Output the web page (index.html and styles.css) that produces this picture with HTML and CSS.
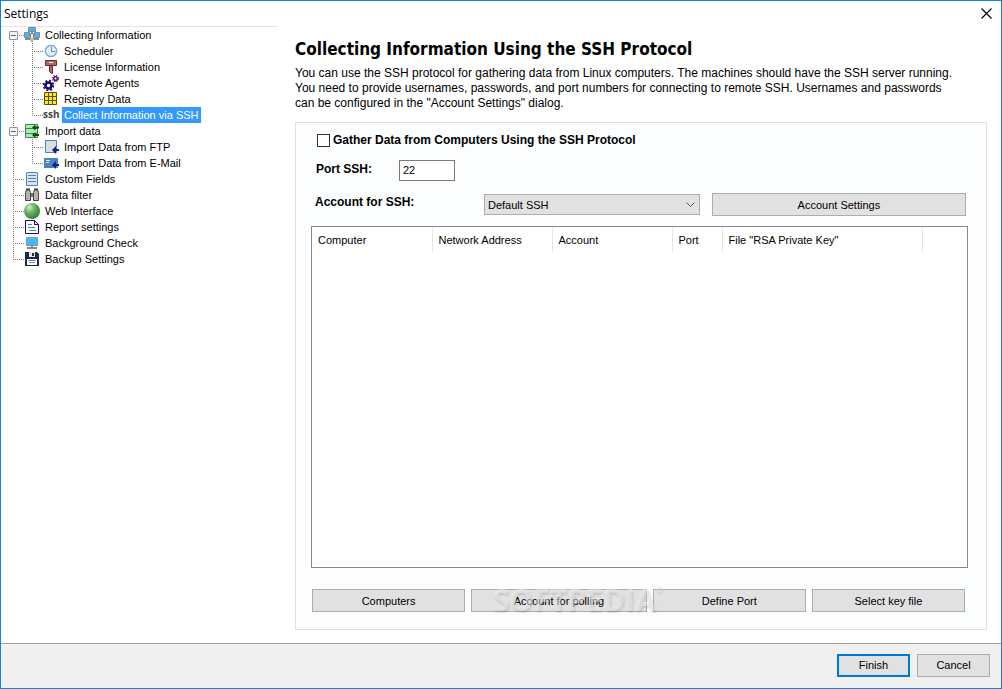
FILE: index.html
```html
<!DOCTYPE html>
<html lang="en">
<head>
    <meta charset="UTF-8">
    <meta name="viewport" content="width=device-width, initial-scale=1.0">
    <title>Settings</title>
    <link rel="stylesheet" href="styles.css">
</head>
<body>
    <div class="window">
        <header class="titlebar">
            <span>Settings</span>
            <button class="close" type="button" aria-label="Close">
                <svg width="11" height="11" viewBox="0 0 11 11"><path d="M.5.5l10 10M10.5.5l-10 10" stroke="#000" stroke-width="1.2"/></svg>
            </button>
        </header>

        <div class="main">
            <nav class="sidebar">
                <ul class="tree">
                    <li>
                        <div class="row">
                            <button class="toggle" type="button" aria-expanded="true" aria-label="Collecting Information group"></button>
                            <svg class="icon" viewBox="0 0 16 16">
                                <path d="M4.5.5h7v4h-7z" fill="#3fb8ff" stroke="#888"/>
                                <path d="M.5 5.5h5v5h-5zM10.5 5.5h5v5h-5z" fill="#3fb8ff" stroke="#888"/>
                                <path d="M1 12h5M10 12h5M7 5.5h2" stroke="#888" stroke-width="2"/>
                                <path d="M6.5 6.5h3v4l-1 4h-1l-1-4z" fill="#e8e8e8" stroke="#888"/>
                                <path d="M8 11v4" stroke="#8fc98f" stroke-width="2"/>
                            </svg>
                            <a href="#">Collecting Information</a>
                        </div>
                        <ul>
                            <li><div class="row">
                                <svg class="icon" viewBox="0 0 16 16">
                                    <circle cx="8" cy="8" r="5.6" fill="#e8f1fa" stroke="#81aad2" stroke-width="1.5"/>
                                    <path d="M8.5 4v4.5h3.5" fill="none" stroke="#5888b8"/>
                                </svg>
                                <a href="#">Scheduler</a>
                            </div></li>
                            <li><div class="row">
                                <svg class="icon" viewBox="0 0 16 16">
                                    <path d="M2.5 1.5h11v5h-11z" fill="#b96464" stroke="#672b2b"/>
                                    <path d="M6 3.5h4" stroke="#fff"/>
                                    <path d="M6.5 6.5h3v8h-1l-2-2z" fill="#b96464" stroke="#672b2b"/>
                                </svg>
                                <a href="#">License Information</a>
                            </div></li>
                            <li><div class="row">
                                <svg class="icon" viewBox="0 0 16 16">
                                    <circle cx="5.5" cy="10.5" r="3" fill="#fff" stroke="#19096b" stroke-width="2.6"/>
                                    <circle cx="5.5" cy="10.5" r="4.8" fill="none" stroke="#19096b" stroke-width="2" stroke-dasharray="1.9 1.87"/>
                                    <circle cx="12.5" cy="3.5" r="1.8" fill="#fff" stroke="#5c1163" stroke-width="1.5"/>
                                    <circle cx="12.5" cy="3.5" r="3" fill="none" stroke="#5c1163" stroke-width="1.2" stroke-dasharray="1.2 1.16"/>
                                </svg>
                                <a href="#">Remote Agents</a>
                            </div></li>
                            <li><div class="row">
                                <svg class="icon" viewBox="0 0 16 16">
                                    <path d="M1.5 1.5h12v12h-12z" fill="#ffeb0a" stroke="#555018"/>
                                    <path d="M5.5 1v13M9.5 1v13M1 5.5h13M1 9.5h13" stroke="#555018"/>
                                </svg>
                                <a href="#">Registry Data</a>
                            </div></li>
                            <li><div class="row">
                                <span class="icon ssh">ssh</span>
                                <a class="selected" href="#" aria-current="page">Collect Information via SSH</a>
                            </div></li>
                        </ul>
                    </li>
                    <li>
                        <div class="row">
                            <button class="toggle" type="button" aria-expanded="true" aria-label="Import data group"></button>
                            <svg class="icon" viewBox="0 0 16 16">
                                <path d="M1.5 1.5h12v13h-12z" fill="#a4f0a4" stroke="#4b7a70"/>
                                <path d="M1 5.5h13M1 10.5h13" stroke="#4b7a70"/>
                                <path d="M15 4.5h-5M15 12h-5" stroke="#0a500a" stroke-width="2"/>
                                <path d="M8 4.5l3.5-3v6zM8 12l3.5-3v6z" fill="#0a500a"/>
                            </svg>
                            <a href="#">Import data</a>
                        </div>
                        <ul>
                            <li><div class="row">
                                <svg class="icon" viewBox="0 0 16 16">
                                    <path d="M2.5 1.5h11v12h-11z" fill="#dcdcdc" stroke="#4a84be"/>
                                    <path d="M16 11h-5" stroke="#1d1d8f" stroke-width="2"/>
                                    <path d="M9 11l4-4v8z" fill="#1d1d8f"/>
                                </svg>
                                <a href="#">Import Data from FTP</a>
                            </div></li>
                            <li><div class="row">
                                <svg class="icon" viewBox="0 0 16 16">
                                    <path d="M1 3h14v10h-14z" fill="#4a84be"/>
                                    <path d="M3 5.5h4M3 7.5h3" stroke="#dce8f4"/>
                                    <path d="M16 10h-5" stroke="#1d1d8f" stroke-width="2"/>
                                    <path d="M9 10l4-4v8z" fill="#1d1d8f"/>
                                </svg>
                                <a href="#">Import Data from E-Mail</a>
                            </div></li>
                        </ul>
                    </li>
                    <li><div class="row">
                        <svg class="icon" viewBox="0 0 16 16">
                            <path d="M2.5 1.5h11v13h-11z" fill="#e0e4e8" stroke="#4a84be"/>
                            <path d="M4 4.5h8M4 7.5h8M4 10.5h8" stroke="#4a84be"/>
                        </svg>
                        <a href="#">Custom Fields</a>
                    </div></li>
                    <li><div class="row">
                        <svg class="icon" viewBox="0 0 16 16">
                            <path d="M2.5 2.5h3l1 3v8h-5v-8zM10.5 2.5h3l1 3v8h-5v-8z" fill="#b4b4b4" stroke="#444"/>
                            <path d="M2 2.5h4M10 2.5h4" stroke="#444" stroke-width="2"/>
                            <path d="M7 6h2v4h-2z" fill="#777"/>
                        </svg>
                        <a href="#">Data filter</a>
                    </div></li>
                    <li><div class="row">
                        <svg class="icon" viewBox="0 0 16 16">
                            <defs><radialGradient id="ball" cx="35%" cy="28%" r="75%">
                                <stop offset="0" stop-color="#d2edcb"/>
                                <stop offset=".4" stop-color="#70b867"/>
                                <stop offset="1" stop-color="#317a32"/>
                            </radialGradient></defs>
                            <circle cx="8" cy="8" r="8" fill="url(#ball)"/>
                        </svg>
                        <a href="#">Web Interface</a>
                    </div></li>
                    <li><div class="row">
                        <svg class="icon" viewBox="0 0 16 16">
                            <path d="M1.5 1.5h9l4 4v9h-13z" fill="#fff" stroke="#19096b"/>
                            <path d="M10.5 1.5v4h4" fill="none" stroke="#19096b"/>
                            <path d="M4 5.5h4M4 8.5h7M5 11.5h7" stroke="#4a84be"/>
                        </svg>
                        <a href="#">Report settings</a>
                    </div></li>
                    <li><div class="row">
                        <svg class="icon" viewBox="0 0 16 16">
                            <path d="M2.5 2.5h11v8h-11z" fill="#3fb8ff" stroke="#8c9aa4"/>
                            <path d="M7 11h2v1h4v2h-10v-2h4z" fill="#888"/>
                        </svg>
                        <a href="#">Background Check</a>
                    </div></li>
                    <li><div class="row">
                        <svg class="icon" viewBox="0 0 16 16">
                            <path d="M1 1h12l2 2v12h-14z" fill="#1c2a40"/>
                            <path d="M5 1h6v5h-6z" fill="#e8e8e8"/>
                            <path d="M8 2h2v3h-2z" fill="#1c2a40"/>
                            <path d="M3 8h10v6h-10z" fill="#fff"/>
                            <path d="M4 9.5h8M5 11.5h6" stroke="#888"/>
                        </svg>
                        <a href="#">Backup Settings</a>
                    </div></li>
                </ul>
            </nav>

            <main class="content">
                <h1>Collecting Information Using the SSH Protocol</h1>
                <p class="intro">You can use the SSH protocol for gathering data from Linux computers. The machines should have the SSH server running. You need to provide usernames, passwords, and port numbers for connecting to remote SSH. Usernames and passwords can be configured in the "Account Settings" dialog.</p>

                <form class="panel">
                    <div class="field check">
                        <input type="checkbox" id="gather">
                        <label for="gather">Gather Data from Computers Using the SSH Protocol</label>
                    </div>
                    <div class="field port">
                        <label for="port">Port SSH:</label>
                        <input type="text" id="port" value="22">
                    </div>
                    <div class="field account">
                        <label for="account">Account for SSH:</label>
                        <select id="account">
                            <option>Default SSH</option>
                        </select>
                        <button class="btn" type="button">Account Settings</button>
                    </div>

                    <div class="list">
                        <table>
                            <thead>
                                <tr>
                                    <th class="wide">Computer</th>
                                    <th class="wide">Network Address</th>
                                    <th class="wide">Account</th>
                                    <th class="narrow">Port</th>
                                    <th class="key">File "RSA Private Key"</th>
                                    <td></td>
                                </tr>
                            </thead>
                            <tbody></tbody>
                        </table>
                    </div>

                    <div class="actions">
                        <button class="btn" type="button">Computers</button>
                        <button class="btn polling" type="button">Account for polling</button>
                        <button class="btn" type="button">Define Port</button>
                        <button class="btn" type="button">Select key file</button>
                        <span class="watermark">SOFTPEDIA<sup>®</sup></span>
                    </div>
                </form>
            </main>
        </div>

        <footer class="footer">
            <button class="btn default" type="button">Finish</button>
            <button class="btn" type="button">Cancel</button>
        </footer>
    </div>

    <script>
        document.querySelectorAll('.toggle').forEach((btn) => {
            btn.addEventListener('click', () => {
                const open = btn.getAttribute('aria-expanded') === 'true';
                btn.setAttribute('aria-expanded', !open);
                btn.closest('li').querySelector('ul').hidden = open;
            })
        })
    </script>
</body>
</html>
```

FILE: styles.css
```css
*{
    box-sizing: border-box;
}
body{
    margin: 0;
    font: 11px/14px "Liberation Sans", Arial, sans-serif;
    color: #000;
    background: #fff;
}
button, input, select{
    font: inherit;
    color: inherit;
    border-radius: 0;
}
.window{
    display: flex;
    flex-direction: column;
    min-height: 100vh;
    border: 1px solid #1883d7;
}
.titlebar{
    display: flex;
    justify-content: space-between;
    align-items: center;
    height: 25px;
    padding: 0 9px 0 3px;
    font: 12px/16px "Open Sans", "Noto Sans", sans-serif;
}
.close{
    display: flex;
    padding: 0;
    border: 0;
    background: none;
}
.main{
    flex: 1;
    display: flex;
}

/* tree */
.sidebar{
    width: 277px;
    flex-shrink: 0;
    border-top: 1px solid #e3e3e3;
    padding-left: 12px;
}
.tree, .tree ul{
    margin: 0;
    padding: 0;
    list-style: none;
}
.tree ul{
    padding-left: 19px;
}
.tree li{
    background:
        repeating-linear-gradient(to bottom, #808080 0 1px, transparent 1px 2px) 0 0 / 1px 100% no-repeat,
        repeating-linear-gradient(to right, #808080 0 1px, transparent 1px 2px) 0 8px / 12px 1px no-repeat;
}
.tree > li:first-child{
    background-position: 0 8px, 0 8px;
}
.tree li:last-child{
    background-size: 1px 8px, 12px 1px;
}
.row{
    display: flex;
    align-items: center;
    height: 16px;
    padding-left: 11px;
}
.toggle{
    width: 9px;
    height: 9px;
    margin: 0 6px 0 -15px;
    padding: 0;
    border: 1px solid #919191;
    border-radius: 1px;
    background: linear-gradient(#4b63a7, #4b63a7) center / 5px 1px no-repeat, #f6f6f6;
}
.toggle[aria-expanded="false"]{
    background: linear-gradient(#4b63a7, #4b63a7) center / 5px 1px no-repeat, linear-gradient(#4b63a7, #4b63a7) center / 1px 5px no-repeat, #f6f6f6;
}
.icon{
    width: 16px;
    height: 16px;
    flex-shrink: 0;
}
.ssh{
    font: bold 10px/14px "Open Sans", sans-serif;
    color: #444;
    background: #fff;
}
.row a{
    margin-left: 3px;
    padding: 0 2px;
    line-height: 16px;
    color: #000;
    text-decoration: none;
    white-space: nowrap;
}
.row a.selected{
    color: #fff;
    background: #3399ff;
}

/* page */
.content{
    flex: 1;
    display: flex;
    flex-direction: column;
    padding: 13px 14px 13px 17px;
}
h1{
    margin: 0 0 7px;
    font: bold 17px/20px "DejaVu Sans Condensed", Tahoma, sans-serif;
}
.intro{
    margin: 0 30px 11px 0;
    font-size: 12px;
    line-height: 15px;
}
.panel{
    flex: 1;
    display: flex;
    flex-direction: column;
    padding: 10px 18px 17px 15px;
    border: 1px solid #dfdfdf;
    background: #fcfdff;
}
.field{
    display: flex;
    align-items: center;
    padding-left: 5px;
}
.field label{
    font-size: 12px;
    font-weight: bold;
}
.check input{
    appearance: none;
    width: 13px;
    height: 13px;
    margin: 0 3px 0 1px;
    border: 1px solid #333;
    background: #fff;
}
.check input:checked{
    background: #333;
    box-shadow: inset 0 0 0 2px #fff;
}
.port{
    margin: 13px 0 12px;
}
.port label{
    width: 83px;
    padding-bottom: 3px;
}
.port input{
    width: 56px;
    height: 21px;
    padding: 0 3px 2px;
    border: 1px solid #7a7a7a;
    background: #fff;
}
.account{
    padding: 0 2px 0 4px;
}
.account label{
    width: 169px;
    padding-bottom: 6px;
}
.account select{
    appearance: none;
    flex: 216 1 0;
    height: 21px;
    margin-right: 12px;
    padding: 0 3px;
    border: 1px solid #adadad;
    background: #e1e1e1 url("data:image/svg+xml,%3Csvg xmlns='http://www.w3.org/2000/svg' width='9' height='6'%3E%3Cpath d='M.5.5l4 4 4-4' fill='none' stroke='%23555'/%3E%3C/svg%3E") right 4px center no-repeat;
}
.account .btn{
    flex: 254 1 0;
}
.btn{
    height: 23px;
    padding: 0 4px;
    border: 1px solid #adadad;
    background: #e1e1e1;
    text-align: center;
}
.list{
    flex: 1;
    margin: 10px 0 21px;
    border: 1px solid #828790;
    background: #fff;
}
table{
    width: 100%;
    table-layout: fixed;
    border-collapse: collapse;
}
th{
    height: 25px;
    padding: 0 0 0 6px;
    border-right: 1px solid #e5e5e5;
    font-weight: normal;
    text-align: left;
    white-space: nowrap;
}
.wide{
    width: 120px;
}
.narrow{
    width: 50px;
}
.key{
    width: 200px;
}
.actions{
    position: relative;
    display: flex;
    gap: 6px;
    padding: 0 3px 0 1px;
}
.actions .btn{
    flex: 153 1 0;
}
.actions .polling{
    flex-grow: 177;
}
.watermark{
    position: absolute;
    left: 182px;
    top: -4px;
    font: bold 30px/30px "Open Sans", sans-serif;
    color: rgba(240, 240, 240, 0.5);
    text-shadow: 1px 2px 2px rgba(0, 0, 0, 0.12);
    pointer-events: none;
}
.watermark sup{
    font-size: 8px;
    line-height: 8px;
    vertical-align: top;
}
.footer{
    display: flex;
    justify-content: flex-end;
    align-items: center;
    gap: 7px;
    height: 45px;
    padding: 0 11px 2px 0;
    border-top: 1px solid #a0a0a0;
    background: #f0f0f0;
}
.footer .btn{
    width: 73px;
}
.btn.default{
    border: 2px solid #0078d7;
}
```
